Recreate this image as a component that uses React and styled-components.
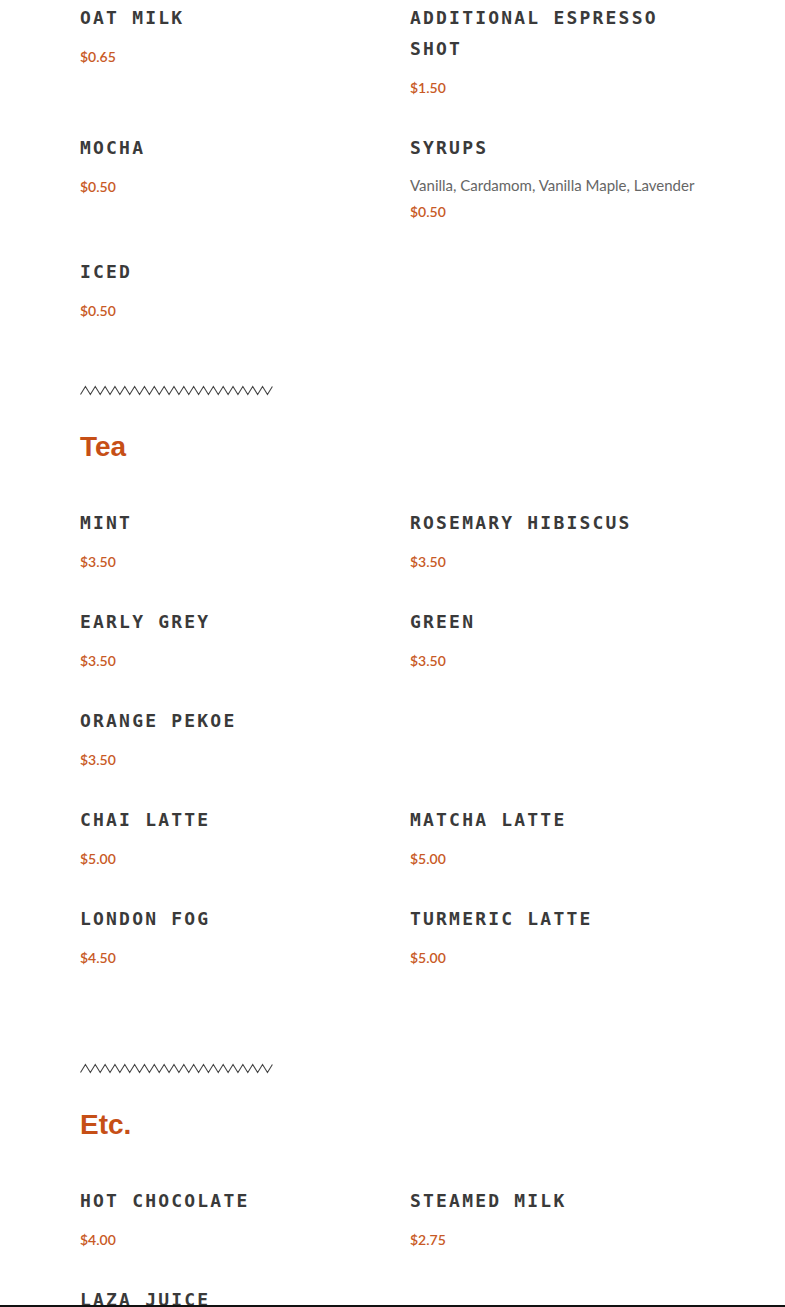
import React from 'react';
import styled, { createGlobalStyle } from 'styled-components';

const GlobalStyle = createGlobalStyle`
  html, body {
    margin: 0;
    padding: 0;
    background: #fff;
  }
`;

const Page = styled.div`
  box-sizing: border-box;
  height: 1307px;
  overflow: hidden;
  border-bottom: 2px solid #111;
  padding: 1.5px 0 0 80px;
`;

const Section = styled.section`
  padding-bottom: ${({ $tail }) => $tail}px;
`;

const Heading = styled.h2`
  margin: 34px 0 42.5px;
  font-family: "Liberation Sans", Arial, sans-serif;
  font-weight: bold;
  font-size: 28px;
  line-height: 34px;
  color: #c64f16;
`;

const Grid = styled.div`
  display: grid;
  grid-template-columns: 290px 290px;
  column-gap: 40px;
  row-gap: 33.5px;
`;

const Item = styled.div`
  display: flex;
  flex-direction: column;
`;

const Name = styled.div`
  font-family: "DejaVu Sans Mono", "Liberation Mono", monospace;
  font-weight: bold;
  font-size: 18px;
  line-height: 31px;
  letter-spacing: 2.2px;
  color: #3a3a3a;
  text-transform: uppercase;
`;

const Desc = styled.div`
  margin-top: 12px;
  font-family: Lato, "Open Sans", sans-serif;
  font-size: 15px;
  line-height: 20px;
  color: #666;
`;

const Price = styled.div`
  margin-top: ${({ $afterDesc }) => ($afterDesc ? 7.5 : 14.5)}px;
  font-family: Lato, "Open Sans", sans-serif;
  font-weight: 600;
  font-size: 14px;
  line-height: 20px;
  color: #c85a26;
`;

const Zig = styled.svg`
  display: block;
  width: 196px;
  height: 12px;
`;

const Zigzag = () => {
  const pts = [];
  for (let i = 0; i < 40; i++) {
    pts.push(`${(0.5 + i * 4.92).toFixed(2)},${i % 2 === 0 ? 10.5 : 2.5}`);
  }
  return (
    <Zig viewBox="0 0 196 12">
      <polyline points={pts.join(' ')} fill="none" stroke="#444" strokeWidth="1.1" />
    </Zig>
  );
};

const MenuItem = ({ item }) => (
  <Item>
    <Name>{item.name}</Name>
    {item.desc && <Desc>{item.desc}</Desc>}
    <Price $afterDesc={!!item.desc}>{item.price}</Price>
  </Item>
);

const addOns = [
  { name: 'Oat Milk', price: '$0.65' },
  { name: 'Additional Espresso Shot', price: '$1.50' },
  { name: 'Mocha', price: '$0.50' },
  { name: 'Syrups', desc: 'Vanilla, Cardamom, Vanilla Maple, Lavender', price: '$0.50' },
  { name: 'Iced', price: '$0.50' },
];

const tea = [
  { name: 'Mint', price: '$3.50' },
  { name: 'Rosemary Hibiscus', price: '$3.50' },
  { name: 'Early Grey', price: '$3.50' },
  { name: 'Green', price: '$3.50' },
  { name: 'Orange Pekoe', price: '$3.50' },
  null,
  { name: 'Chai Latte', price: '$5.00' },
  { name: 'Matcha Latte', price: '$5.00' },
  { name: 'London Fog', price: '$4.50' },
  { name: 'Turmeric Latte', price: '$5.00' },
];

const etc = [
  { name: 'Hot Chocolate', price: '$4.00' },
  { name: 'Steamed Milk', price: '$2.75' },
  { name: 'Laza Juice', price: '$4.00' },
];

const renderGrid = (items) => (
  <Grid>
    {items.map((item, i) => (item ? <MenuItem key={i} item={item} /> : <div key={i} />))}
  </Grid>
);

export default function App() {
  return (
    <Page>
      <GlobalStyle />
      <Section $tail={63}>{renderGrid(addOns)}</Section>
      <Zigzag />
      <Section $tail={94}>
        <Heading>Tea</Heading>
        {renderGrid(tea)}
      </Section>
      <Zigzag />
      <Section $tail={0}>
        <Heading>Etc.</Heading>
        {renderGrid(etc)}
      </Section>
    </Page>
  );
}
